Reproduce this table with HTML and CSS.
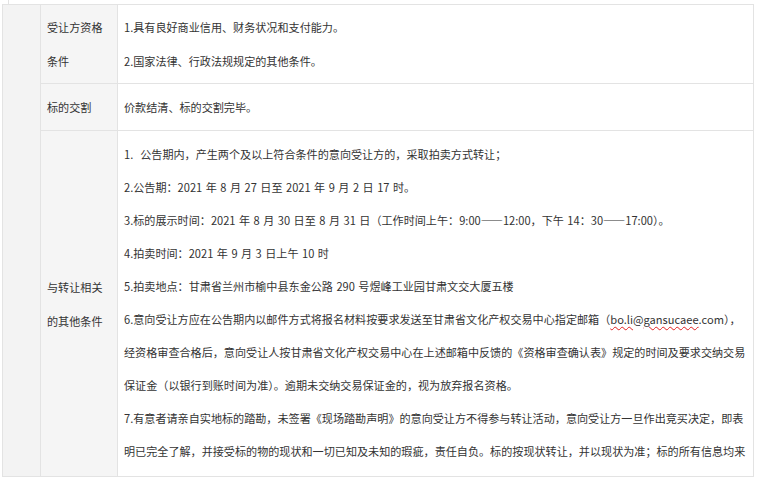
FILE: index.html
```html
<!DOCTYPE html>
<html lang="zh-CN">
<head>
    <meta charset="UTF-8">
    <title>交易条件</title>
    <link rel="stylesheet" href="styles.css">
</head>
<body>
    <div class="page">
        <div class="stub"></div>
        <table class="info">
            <colgroup>
                <col class="col-side">
                <col class="col-label">
                <col>
            </colgroup>
            <tr>
                <td class="side" rowspan="3"></td>
                <td class="label">受让方资格条件</td>
                <td class="value short">
                    <p>1.具有良好商业信用、财务状况和支付能力。</p>
                    <p>2.国家法律、行政法规规定的其他条件。</p>
                </td>
            </tr>
            <tr>
                <td class="label">标的交割</td>
                <td class="value single">
                    <p>价款结清、标的交割完毕。</p>
                </td>
            </tr>
            <tr>
                <td class="label">与转让相关的其他条件</td>
                <td class="value long">
                    <p>1.&nbsp; 公告期内，产生两个及以上符合条件的意向受让方的，采取拍卖方式转让；</p>
                    <p>2.公告期：2021 年 8 月 27 日至 2021 年 9 月 2 日 17 时。</p>
                    <p>3.标的展示时间：2021 年 8 月 30 日至 8 月 31 日（工作时间上午：9:00——12:00，下午 14：30——17:00）。</p>
                    <p>4.拍卖时间：2021 年 9 月 3 日上午 10 时</p>
                    <p>5.拍卖地点：甘肃省兰州市榆中县东金公路 290 号煜峰工业园甘肃文交大厦五楼</p>
                    <p>6.意向受让方应在公告期内以邮件方式将报名材料按要求发送至甘肃省文化产权交易中心指定邮箱（<span class="typo">bo.li</span>@<span class="typo">gansucaee</span>.com），经资格审查合格后，意向受让人按甘肃省文化产权交易中心在上述邮箱中反馈的《资格审查确认表》规定的时间及要求交纳交易保证金（以银行到账时间为准）。逾期未交纳交易保证金的，视为放弃报名资格。</p>
                    <p>7.有意者请亲自实地标的踏勘，未签署《现场踏勘声明》的意向受让方不得参与转让活动，意向受让方一旦作出竞买决定，即表明已完全了解，并接受标的物的现状和一切已知及未知的瑕疵，责任自负。标的按现状转让，并以现状为准；标的所有信息均来</p>
                </td>
            </tr>
        </table>
    </div>
</body>
</html>
```

FILE: styles.css
```css
body {
    margin: 0;
    padding: 0;
    background-color: #fff;
    color: #333;
    font-family: "Noto Sans CJK SC", "Liberation Sans", sans-serif;
    font-size: 11.1px;
}
.page {
    padding-left: 2px;
    width: 752px;
}
.stub {
    height: 4px;
    margin-left: 6px;
    border-left: 1px solid #e3e3e3;
}
.info {
    width: 752px;
    border-collapse: collapse;
    table-layout: fixed;
}
.col-side {
    width: 38px;
}
.col-label {
    width: 77px;
}
.info td {
    border: 1px solid #e3e3e3;
    padding: 0 6px;
    vertical-align: middle;
}
.info .side {
    background-color: #f3f3f3;
}
.info .label {
    background-color: #f5f5f5;
    line-height: 34px;
}
.value p {
    margin: 0;
}
.info .short {
    padding: 5px 4px 5px 6px;
    line-height: 34px;
}
.info .single {
    padding: 6px 4px 6px 6px;
    line-height: 34px;
}
.info .long {
    padding: 7px 4px 8px 6px;
    line-height: 33px;
    word-spacing: 1px;
}
.typo {
    text-decoration: underline wavy #e02020;
    text-decoration-thickness: 1px;
    text-underline-offset: 2px;
}
```
